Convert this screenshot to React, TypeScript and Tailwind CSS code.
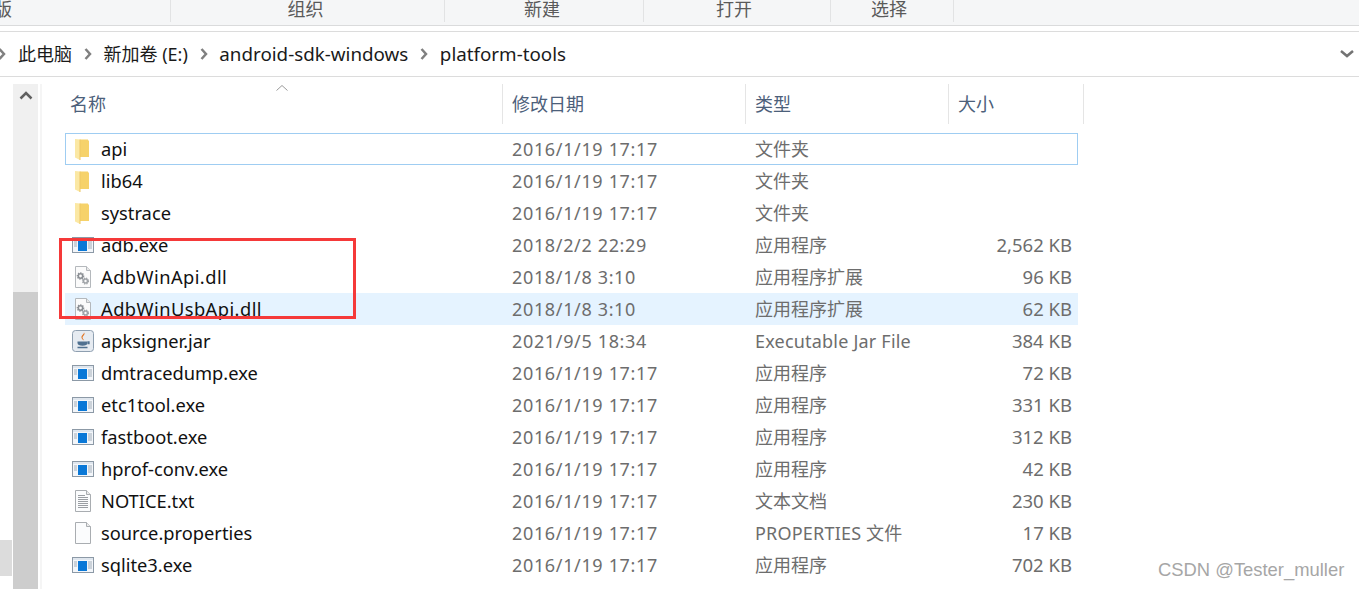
const sans = "font-['Noto_Sans','Noto_Sans_CJK_SC',sans-serif]";

type FileKind = "folder" | "exe" | "dll" | "jar" | "txt" | "blank";

interface FileRow {
  name: string;
  date: string;
  type: string;
  size?: string;
  kind: FileKind;
}

const files: FileRow[] = [
  { name: "api", date: "2016/1/19 17:17", type: "文件夹", kind: "folder" },
  { name: "lib64", date: "2016/1/19 17:17", type: "文件夹", kind: "folder" },
  { name: "systrace", date: "2016/1/19 17:17", type: "文件夹", kind: "folder" },
  { name: "adb.exe", date: "2018/2/2 22:29", type: "应用程序", size: "2,562 KB", kind: "exe" },
  { name: "AdbWinApi.dll", date: "2018/1/8 3:10", type: "应用程序扩展", size: "96 KB", kind: "dll" },
  { name: "AdbWinUsbApi.dll", date: "2018/1/8 3:10", type: "应用程序扩展", size: "62 KB", kind: "dll" },
  { name: "apksigner.jar", date: "2021/9/5 18:34", type: "Executable Jar File", size: "384 KB", kind: "jar" },
  { name: "dmtracedump.exe", date: "2016/1/19 17:17", type: "应用程序", size: "72 KB", kind: "exe" },
  { name: "etc1tool.exe", date: "2016/1/19 17:17", type: "应用程序", size: "331 KB", kind: "exe" },
  { name: "fastboot.exe", date: "2016/1/19 17:17", type: "应用程序", size: "312 KB", kind: "exe" },
  { name: "hprof-conv.exe", date: "2016/1/19 17:17", type: "应用程序", size: "42 KB", kind: "exe" },
  { name: "NOTICE.txt", date: "2016/1/19 17:17", type: "文本文档", size: "230 KB", kind: "txt" },
  { name: "source.properties", date: "2016/1/19 17:17", type: "PROPERTIES 文件", size: "17 KB", kind: "blank" },
  { name: "sqlite3.exe", date: "2016/1/19 17:17", type: "应用程序", size: "702 KB", kind: "exe" },
];

function Gear({ cx, cy, r, color }: { cx: number; cy: number; r: number; color: string }) {
  return (
    <>
      <circle cx={cx} cy={cy} r={r} fill="none" stroke={color} strokeWidth="1.6" />
      <circle cx={cx} cy={cy} r={r + 1} fill="none" stroke={color} strokeWidth="1.2" strokeDasharray="1.3 1.1" />
    </>
  );
}

function FileIcon({ kind }: { kind: FileKind }) {
  if (kind === "folder") {
    return (
      <svg width="22" height="22" viewBox="0 0 22 22">
        <path d="M8 1.500h8v1h1v16.500H8z" fill="#f6d26a" />
        <path d="M3 1l5 .5V22l-5-2.500z" fill="#fbe8a4" />
        <path d="M8 1.500v20.500" stroke="#eec765" />
      </svg>
    );
  }
  if (kind === "exe") {
    return (
      <svg width="22" height="22" viewBox="0 0 22 22">
        <rect x="0.500" y="3.500" width="21" height="15" fill="#f3f6fa" stroke="#8c99a6" />
        <rect x="1" y="4" width="20" height="2" fill="#dfe6ee" />
        <rect x="6" y="7" width="9" height="10" fill="#0a78d7" />
        <path d="M2 8h3M2 10h3M2 12h3M16 8h4M16 10h4M16 12h4M16 14h4" stroke="#a3aeb9" />
      </svg>
    );
  }
  if (kind === "dll") {
    return (
      <svg width="22" height="22" viewBox="0 0 22 22">
        <path d="M3.500 0.500h11l4 4v17h-15z" fill="#fbfbfb" stroke="#b4b8bc" />
        <path d="M14.500 0.500v4h4" fill="#e8e8e8" stroke="#b4b8bc" />
        <Gear cx={8.500} cy={10} r={2.200} color="#8b8f94" />
        <Gear cx={13.500} cy={15} r={2} color="#a0a4a8" />
      </svg>
    );
  }
  if (kind === "jar") {
    return (
      <svg width="22" height="22" viewBox="0 0 22 22">
        <rect x="0.500" y="0.500" width="21" height="21" rx="3" fill="#e6ebf1" stroke="#8e9fb0" />
        <path d="M12 2.500c2 2.500-2.500 3.500-1.200 6 .4 1 1 1.200 1.400 2-2-1-3.200-2.200-2.600-4.200C10 5 12 4.200 12 2.500z" fill="#e2711d" />
        <path d="M5.500 11.500h10v1.500c0 1.700-2 2.700-5 2.700s-5-1-5-2.700z" fill="#4f7090" />
        <path d="M15.500 12h1.500v1.500h-1.500M5.500 17.500h10" fill="none" stroke="#4f7090" strokeWidth="1.300" />
      </svg>
    );
  }
  const lines = kind === "txt";
  return (
    <svg width="22" height="22" viewBox="0 0 22 22">
      <path d="M3.500 0.500h11l4 4v17h-15z" fill="#fbfcfd" stroke="#a9adb1" />
      <path d="M14.500 0.500v4h4" fill="#ececec" stroke="#a9adb1" />
      {lines && (
        <path d="M6 5.500h7M6 7.500h10M6 9.500h10M6 11.500h10M6 13.500h10M6 15.500h10M6 17.500h10" stroke="#9a9ea3" />
      )}
    </svg>
  );
}

function Chevron({ className }: { className?: string }) {
  return (
    <svg width="8" height="12" viewBox="0 0 8 12" className={className}>
      <path d="M1.500 1l4.500 5-4.500 5" fill="none" stroke="#808080" strokeWidth="2.500" />
    </svg>
  );
}

function ToolbarGroup({ label, className }: { label: string; className: string }) {
  return (
    <div className={`flex h-[22px] items-center justify-center border-r border-[#e2e3e4] ${className}`}>
      <span className="-mt-[4px]">{label}</span>
    </div>
  );
}

function Toolbar() {
  return (
    <div className="flex h-[26px] border-b border-[#dadbdc] bg-[#f5f6f7] text-[18px] leading-[18px] text-[#5a5a5a]">
      <div className="flex h-[22px] w-[171px] items-center overflow-hidden border-r border-[#e2e3e4]">
        <span className="-ml-[6px] -mt-[4px]">版</span>
      </div>
      <ToolbarGroup label="组织" className="w-[274px] pr-[4px]" />
      <ToolbarGroup label="新建" className="w-[199px] pr-[4px]" />
      <ToolbarGroup label="打开" className="w-[187px] pr-[6px]" />
      <ToolbarGroup label="选择" className="w-[123px] pr-[6px]" />
    </div>
  );
}

function Breadcrumb() {
  const parts = [
    { label: "此电脑", cls: "" },
    { label: "新加卷 (E:)", cls: "" },
    { label: "android-sdk-windows", cls: "text-[18.8px]" },
    { label: "platform-tools", cls: "text-[18.8px]" },
  ];
  return (
    <div className="mt-[5px] flex h-[46px] items-center border-y border-[#dcdcdc] pr-[4px] text-[18px] leading-none text-[#1a1a1a]">
      <Chevron className="-ml-[2px] mr-[12px]" />
      {parts.map((part, i) => (
        <div key={part.label} className="flex items-center">
          {i > 0 && <Chevron className="mx-[11.75px]" />}
          <span className={part.cls}>{part.label}</span>
        </div>
      ))}
      <svg width="16" height="10" viewBox="0 0 16 10" className="ml-auto">
        <path d="M2 2l6 5 6-5" fill="none" stroke="#737373" strokeWidth="2.500" />
      </svg>
    </div>
  );
}

function ColumnHeader() {
  const cols = [
    { label: "名称", cls: "w-[438px] pl-[5px]" },
    { label: "修改日期", cls: "w-[243px] pl-[9px]" },
    { label: "类型", cls: "w-[203px] pl-[9px]" },
    { label: "大小", cls: "w-[135px] pl-[9px]" },
  ];
  return (
    <div className="relative flex h-[40px] text-[18px] text-[#4c607a]">
      {cols.map((col) => (
        <div key={col.label} className={`flex items-center border-r border-[#e5e5e5] ${col.cls}`}>
          {col.label}
        </div>
      ))}
      <svg width="14" height="8" viewBox="0 0 14 8" className="absolute left-[210px] top-0">
        <path d="M1.500 6.500L7 1.500l5.500 5" fill="none" stroke="#9a9a9a" />
      </svg>
    </div>
  );
}

function Row({ file, index }: { file: FileRow; index: number }) {
  const selected = index === 0;
  const hovered = file.name === "AdbWinUsbApi.dll";
  const wideName = file.name.startsWith("AdbWin");
  return (
    <div
      className={`flex h-[32px] w-[1013px] items-center text-[18px] text-[#6d6d6d] ${
        selected ? "border border-[#9fcdf2]" : ""
      } ${hovered ? "bg-[#e5f3ff]" : ""}`}
    >
      <div className={`flex items-center gap-[7px] text-[18.3px] text-[#111] ${selected ? "w-[436px] pl-[6px]" : "w-[437px] pl-[7px]"}`}>
        <FileIcon kind={file.kind} />
        <span className={wideName ? "tracking-[0.45px]" : ""}>{file.name}</span>
      </div>
      <div className="w-[243px] pl-[10px] tracking-[0.65px]">{file.date}</div>
      <div className={`w-[203px] pl-[10px] ${/[A-Z]/.test(file.type) ? "tracking-[0.2px]" : ""}`}>{file.type}</div>
      <div className="w-[124px] text-right text-[18.5px]">{file.size}</div>
    </div>
  );
}

function LeftStrip() {
  return (
    <>
      <div className="flex w-[13px] shrink-0 flex-col">
        <div className="mt-[463px] h-[36px] w-[12px] bg-[#dcdcdc]" />
      </div>
      <div className="mt-[7px] flex w-[25px] shrink-0 flex-col bg-[#f0f0f0]">
        <div className="flex h-[208px] justify-center pt-[6px]">
          <svg width="14" height="10" viewBox="0 0 14 10">
            <path d="M1.500 8.500L7 3l5.500 5.500" fill="none" stroke="#606060" strokeWidth="2.500" />
          </svg>
        </div>
        <div className="flex-1 bg-[#cdcdcd]" />
      </div>
      <div className="ml-[2px] mt-[7px] w-[2px] shrink-0 bg-[#f5f5f5]" />
    </>
  );
}

export default function App() {
  return (
    <div className={`relative h-[589px] w-[1359px] overflow-hidden bg-white ${sans}`}>
      <Toolbar />
      <Breadcrumb />
      <div className="flex h-[512px]">
        <LeftStrip />
        <div className="ml-[23px] flex flex-col pt-[7px]">
          <ColumnHeader />
          <div className="mt-[9px] flex flex-col">
            {files.map((file, i) => (
              <Row key={file.name} file={file} index={i} />
            ))}
          </div>
        </div>
      </div>
      <div className="absolute left-[59px] top-[238px] h-[81px] w-[297px] border-[3px] border-[#f53939]" />
      <div className="absolute left-[1158px] top-[558px] font-['Liberation_Sans',sans-serif] text-[18.4px] leading-[24px] text-[#a6a6a6]">
        CSDN @Tester_muller
      </div>
    </div>
  );
}
